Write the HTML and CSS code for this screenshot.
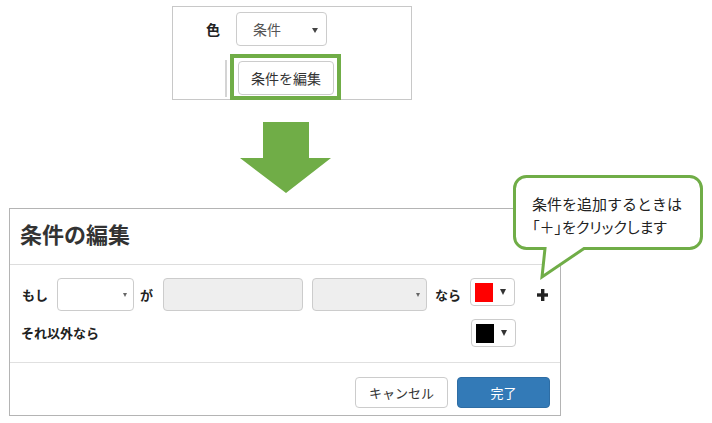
FILE: index.html
```html
<!DOCTYPE html>
<html lang="ja">
<head>
<meta charset="utf-8">
<title>条件の編集</title>
<link rel="stylesheet" href="styles.css">
</head>
<body>
<div class="page">
  <div class="top-panel">
    <div class="tp-row">
      <span class="tp-label">色</span>
      <div class="tp-select"><span class="tp-select-text">条件</span><span class="caret caret-md"></span></div>
    </div>
    <div class="tp-row tp-row2">
      <span class="tp-rule"></span>
      <button class="tp-button">条件を編集</button>
    </div>
    <div class="highlight"></div>
  </div>

  <svg class="big-arrow" width="91" height="71" viewBox="0 0 91 71">
    <polygon points="23,0 69,0 69,36 91,36 46,71 0,36 23,36" fill="#70ad47"/>
  </svg>

  <div class="dialog">
    <div class="dlg-header">
      <h1 class="dlg-title">条件の編集</h1>
    </div>
    <div class="dlg-body">
      <div class="cond-row">
        <span class="lbl lbl-if">もし</span>
        <div class="sel sel-field"><span class="caret caret-sm"></span></div>
        <span class="lbl lbl-ga">が</span>
        <div class="inp inp-value"></div>
        <div class="sel sel-op disabled"><span class="caret caret-sm"></span></div>
        <span class="lbl lbl-nara">なら</span>
        <div class="color-btn"><span class="swatch swatch-red"></span><span class="caret caret-lg"></span></div>
        <svg class="plus" width="11" height="12" viewBox="0 0 11 12">
          <rect x="4" y="0" width="3.4" height="12" fill="#222"/>
          <rect x="0" y="4.3" width="11" height="3.4" fill="#222"/>
        </svg>
      </div>
      <div class="else-row">
        <span class="lbl lbl-else">それ以外なら</span>
        <div class="color-btn"><span class="swatch swatch-black"></span><span class="caret caret-lg"></span></div>
      </div>
    </div>
    <div class="dlg-footer">
      <button class="btn btn-default">キャンセル</button>
      <button class="btn btn-primary">完了</button>
    </div>
  </div>

  <div class="callout">
    <svg class="callout-shape" width="194" height="108" viewBox="0 0 194 108">
      <path d="M15.5 3.5 H178.5 A12 12 0 0 1 190.5 15.5 V63.5 A12 12 0 0 1 178.5 75.5 H73 L31 104 L34 75.5 H15.5 A12 12 0 0 1 3.5 63.5 V15.5 A12 12 0 0 1 15.5 3.5 Z" fill="#ffffff" stroke="#70ad47" stroke-width="3" stroke-linejoin="miter"/>
    </svg>
    <div class="callout-text"><span class="callout-line">条件を追加するときは</span><span class="callout-line callout-tight">「＋」をクリックします</span></div>
  </div>
</div>
</body>
</html>
```

FILE: styles.css
```css
* {
  box-sizing: border-box;
}

html, body {
  margin: 0;
  padding: 0;
  background: #ffffff;
}

body {
  font-family: "Noto Sans CJK JP", "Noto Sans", sans-serif;
  color: #333333;
}

.page {
  position: relative;
  width: 712px;
  height: 423px;
  overflow: hidden;
}

/* ---------- top panel ---------- */
.top-panel {
  position: relative;
  margin: 6px 0 0 172px;
  width: 240px;
  height: 94px;
  border: 1px solid #c8c8c8;
  padding: 5px 0 0 33px;
}

.tp-row {
  display: flex;
  align-items: center;
}

.tp-label {
  font-size: 14px;
  font-weight: bold;
  width: 14px;
  line-height: 20px;
  margin-right: 16px;
  color: #222;
}

.tp-select {
  position: relative;
  width: 91px;
  height: 34px;
  border: 1px solid #cccccc;
  border-radius: 4px;
  display: flex;
  align-items: center;
  padding-left: 16px;
}

.tp-select-text {
  font-size: 14px;
  color: #555;
}

.tp-select .caret {
  position: absolute;
  right: 8px;
  top: 15px;
}

.tp-row2 {
  margin-top: 14px;
  margin-left: 19px;
  align-items: flex-start;
}

.tp-rule {
  width: 2px;
  height: 37px;
  background: #d4d4d4;
  margin-right: 11px;
}

.tp-button {
  margin-top: 1px;
  width: 96px;
  height: 34px;
  border: 1px solid #cccccc;
  border-radius: 4px;
  background: #ffffff;
  font-family: inherit;
  font-size: 14px;
  color: #333;
  padding: 0;
}

.highlight {
  position: absolute;
  left: 57px;
  top: 47px;
  width: 111px;
  height: 46px;
  border: 4px solid #70ad47;
}

/* ---------- arrow ---------- */
.big-arrow {
  display: block;
  margin: 22px 0 0 240px;
}

/* ---------- dialog ---------- */
.dialog {
  margin: 15px 0 0 9px;
  width: 552px;
  height: 208px;
  border: 1px solid #b4b4b4;
  background: #ffffff;
}

.dlg-header {
  height: 56px;
  border-bottom: 1px solid #dddddd;
  padding: 9px 0 0 10px;
}

.dlg-title {
  margin: 0;
  font-size: 22px;
  line-height: 30px;
  font-weight: bold;
  color: #333;
}

.dlg-body {
  height: 98px;
  border-bottom: 1px solid #e0e0e0;
  padding: 13px 0 0 12px;
}

.cond-row {
  display: flex;
  align-items: center;
  height: 33px;
}

.lbl {
  font-size: 13px;
  font-weight: bold;
  color: #222;
  line-height: 18px;
  white-space: nowrap;
}

.lbl-if { width: 26px; margin-right: 9px; }
.lbl-ga { width: 13px; margin: 0 10px 0 6px; }
.lbl-nara { width: 26px; margin: 0 9px 0 8px; }

.sel, .inp {
  position: relative;
  height: 33px;
  border: 1px solid #cccccc;
  border-radius: 4px;
  background: #ffffff;
}

.sel-field { width: 77px; }
.inp-value { width: 140px; background: #eeeeee; }
.sel-op { width: 115px; margin-left: 9px; }
.sel.disabled { background: #eeeeee; }

.sel .caret {
  position: absolute;
  right: 6px;
  top: 14px;
}

.caret {
  display: block;
  width: 0;
  height: 0;
}

.caret-sm {
  border-left: 2.5px solid transparent;
  border-right: 2.5px solid transparent;
  border-top: 4px solid #666;
}

.caret-md {
  border-left: 3px solid transparent;
  border-right: 3px solid transparent;
  border-top: 5px solid #444;
}

.caret-lg {
  border-left: 3.5px solid transparent;
  border-right: 3.5px solid transparent;
  border-top: 6px solid #333;
}

.color-btn {
  align-self: flex-start;
  width: 45px;
  height: 28px;
  border: 1px solid #cccccc;
  border-radius: 4px;
  background: #ffffff;
  display: flex;
  align-items: center;
  padding-left: 4px;
}

.color-btn .caret {
  margin-left: 7px;
}

.swatch {
  display: block;
  width: 18px;
  height: 19px;
}

.swatch-red { background: #ff0000; }
.swatch-black { background: #000000; }

.plus {
  display: block;
  margin-left: 22px;
  margin-top: 1px;
}

.else-row {
  display: flex;
  align-items: center;
  margin-top: 8px;
  height: 28px;
  padding-right: 44px;
}

.lbl-else {
  margin-left: -1px;
}

.else-row .color-btn {
  margin-left: auto;
  align-self: center;
}

.dlg-footer {
  display: flex;
  justify-content: flex-end;
  padding: 14px 10px 0 0;
  gap: 9px;
}

.btn {
  width: 93px;
  height: 31px;
  border-radius: 4px;
  font-family: inherit;
  font-size: 13px;
  padding: 0;
}

.btn-default {
  background: #ffffff;
  border: 1px solid #cccccc;
  color: #333;
}

.btn-primary {
  background: #337ab7;
  border: 1px solid #2e6da4;
  color: #ffffff;
}

/* ---------- callout ---------- */
.callout {
  position: absolute;
  left: 511px;
  top: 173px;
  width: 194px;
  height: 108px;
}

.callout-shape {
  position: absolute;
  left: 0;
  top: 0;
}

.callout-text {
  position: absolute;
  left: 21px;
  top: 19px;
  font-size: 15px;
  line-height: 23px;
  color: #222;
  white-space: nowrap;
}

.callout-line {
  display: block;
}

.callout-tight {
  font-feature-settings: "palt";
}
```
